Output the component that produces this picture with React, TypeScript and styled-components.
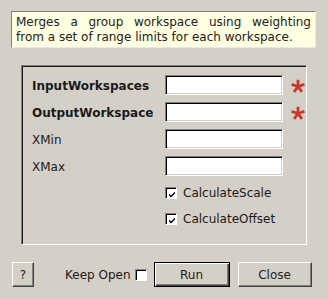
import React from 'react';
import styled, { createGlobalStyle } from 'styled-components';

const GlobalStyle = createGlobalStyle`
  html, body {
    margin: 0;
    padding: 0;
    background: #d4d0c8;
  }
  body {
    width: 328px;
    height: 299px;
    overflow: hidden;
    font-family: "DejaVu Sans", "Liberation Sans", sans-serif;
    font-size: 12px;
    color: #1a1a1a;
  }
`;

interface Property {
  name: string;
  mandatory?: boolean;
}

const properties: Property[] = [
  { name: 'InputWorkspaces', mandatory: true },
  { name: 'OutputWorkspace', mandatory: true },
  { name: 'XMin' },
  { name: 'XMax' },
];

const flags = ['CalculateScale', 'CalculateOffset'];

const Asterisk = () => (
  <svg width="16" height="16" viewBox="0 0 16 16">
    {[0, 72, 144, 216, 288].map((a) => (
      <line
        key={a}
        x1="8"
        y1="8.5"
        x2="8"
        y2="1.8"
        stroke="#c4392c"
        strokeWidth="2.8"
        transform={`rotate(${a} 8 8.5)`}
      />
    ))}
  </svg>
);

const CheckMark = () => (
  <svg width="8" height="8" viewBox="0 0 8 8">
    <path d="M1 3.5 L3 5.5 L7 1.5 L7 3.5 L3 7.5 L1 5.5 Z" fill="#000" />
  </svg>
);

const App: React.FC = () => {
  return (
    <Dialog>
      <GlobalStyle />
      <Description>
        <Justified>Merges a group workspace using weighting</Justified>
        <div>from a set of range limits for each workspace.</div>
      </Description>
      <GroupBox>
        <PropGrid>
          {properties.map((p) => (
            <React.Fragment key={p.name}>
              <PropLabel $bold={p.mandatory}>{p.name}</PropLabel>
              <TextField />
              <Marker>{p.mandatory && <Asterisk />}</Marker>
            </React.Fragment>
          ))}
        </PropGrid>
        <FlagList>
          {flags.map((f) => (
            <FlagRow key={f}>
              <CheckBox>
                <CheckMark />
              </CheckBox>
              <span>{f}</span>
            </FlagRow>
          ))}
        </FlagList>
      </GroupBox>
      <ButtonBar>
        <Button $width={22}>?</Button>
        <KeepOpen>
          Keep Open
          <CheckBox />
        </KeepOpen>
        <Button $width={76} $default>
          Run
        </Button>
        <Button $width={74}>Close</Button>
      </ButtonBar>
    </Dialog>
  );
};

export default App;

const Dialog = styled.div`
  display: flex;
  flex-direction: column;
  padding: 11px 0 0 11px;
`;

const Description = styled.div`
  width: 295px;
  height: 31px;
  padding: 3px 4px 1px 4px;
  background: #ffffe1;
  border: 1px solid;
  border-color: #808080 #e8e8e8 #e8e8e8 #808080;
  line-height: 15px;
  color: #222;
  white-space: nowrap;
`;

const Justified = styled.div`
  text-align: justify;
  text-align-last: justify;
`;

const GroupBox = styled.div`
  margin: 17px 0 0 10px;
  width: 286px;
  height: 180px;
  box-sizing: border-box;
  border: 1px solid;
  border-color: #808080 #ffffff #ffffff #808080;
  box-shadow: inset 1px 1px 0 #1a1a1a;
  padding: 9px 0 0 10px;
`;

const PropGrid = styled.div`
  display: grid;
  grid-template-columns: 133px 118px 30px;
  grid-auto-rows: 20px;
  row-gap: 7px;
  align-items: center;
`;

const PropLabel = styled.span<{ $bold?: boolean }>`
  font-weight: ${(p) => (p.$bold ? 700 : 400)};
  white-space: nowrap;
  padding-top: 1px;
`;

const TextField = styled.div`
  height: 20px;
  box-sizing: border-box;
  background: #fff;
  border: 1px solid;
  border-color: #808080 #ffffff #ffffff #808080;
  box-shadow: inset 1px 1px 0 #000, inset -1px -1px 0 #d4d0c8;
`;

const Marker = styled.div`
  display: flex;
  align-items: center;
  justify-content: center;
  padding-top: 2px;
`;

const FlagList = styled.div`
  display: flex;
  flex-direction: column;
  gap: 12px;
  margin: 10px 0 0 133px;
`;

const FlagRow = styled.div`
  display: flex;
  align-items: center;
  gap: 6px;
  height: 14px;
`;

const CheckBox = styled.div`
  width: 12px;
  height: 12px;
  box-sizing: border-box;
  background: #fff;
  border: 1px solid;
  border-color: #808080 #ffffff #ffffff #808080;
  box-shadow: inset 1px 1px 0 #000;
  display: flex;
  align-items: center;
  justify-content: center;
  padding: 1px 0 0 1px;
`;

const ButtonBar = styled.div`
  display: flex;
  align-items: center;
  margin: 17px 0 0 1px;
  height: 25px;
`;

const KeepOpen = styled.div`
  display: flex;
  align-items: center;
  gap: 4px;
  margin: 0 7px 0 23px;
  white-space: nowrap;
`;

const Button = styled.div<{ $width: number; $default?: boolean }>`
  width: ${(p) => p.$width}px;
  height: 25px;
  box-sizing: border-box;
  display: flex;
  align-items: center;
  justify-content: center;
  background: #d4d0c8;
  border: 1px solid;
  border-color: ${(p) =>
    p.$default ? '#000' : '#ffffff #404040 #404040 #ffffff'};
  box-shadow: ${(p) =>
    p.$default
      ? 'inset 1px 1px 0 #fff, inset -1px -1px 0 #404040, inset -2px -2px 0 #808080'
      : 'inset -1px -1px 0 #808080'};
  margin-right: 8px;
  color: #222;
`;
